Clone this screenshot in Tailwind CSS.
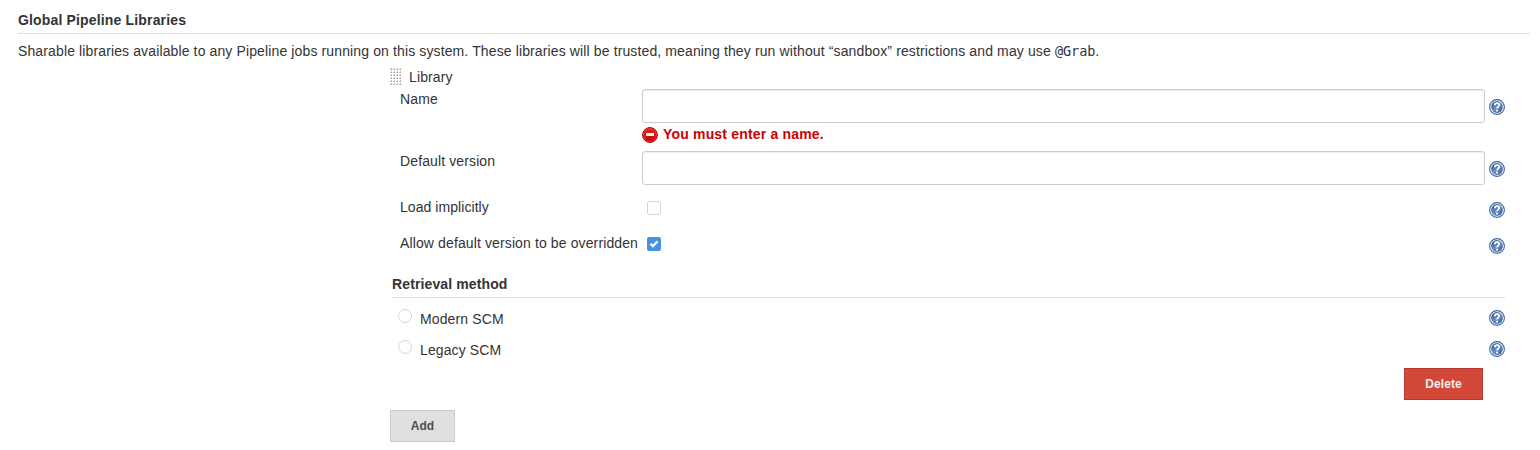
<!DOCTYPE html>
<html lang="en">
<head>
<meta charset="utf-8">
<title>Global Pipeline Libraries</title>
<script src="https://cdn.jsdelivr.net/npm/@tailwindcss/browser@4"></script>
</head>
<body class="h-[450px] overflow-hidden bg-white font-['Liberation_Sans',Arial,sans-serif] text-[14px] leading-5 tracking-[0.12px] text-[#333]">
<svg class="absolute size-0">
  <defs>
    <linearGradient id="blue" x1="0" y1="0" x2="1" y2="1"><stop offset="0" stop-color="#204a87"/><stop offset=".5" stop-color="#6f90c2"/><stop offset="1" stop-color="#2a5592"/></linearGradient>
    <linearGradient id="red" x1="0" y1="0" x2="0" y2="1"><stop offset="0" stop-color="#e81e1e"/><stop offset="1" stop-color="#cc0000"/></linearGradient>
    <pattern id="grip" width="3" height="3" patternUnits="userSpaceOnUse"><path d="M1 0h1v1H1zM0 1h1v1H0z" fill="#c4c2bd"/><path d="M1 1h1v1H1z" fill="#aaa8a3"/></pattern>
  </defs>
  <symbol id="help" viewBox="0 0 16 16">
    <circle cx="8" cy="8" r="7.400" fill="#fff" stroke="#3465a4" stroke-width="1.100"/>
    <circle cx="8" cy="8" r="5.900" fill="url(#blue)"/>
    <path d="M5.800 6.300C5.800 3.400 10.300 3.500 10.200 6c0 1.500-2.100 1.700-2.100 3.500" fill="none" stroke="#fff" stroke-width="1.800"/>
    <path d="M7.100 10.700h2v1.800h-2z" fill="#fff"/>
  </symbol>
</svg>
<main class="pt-[10px] pl-[18px] pr-[10px]">
  <h1 class="h-6 border-b border-[#ddd] font-bold tracking-[0.16px]">Global Pipeline Libraries</h1>
  <p class="mt-[7px] h-5 whitespace-nowrap tracking-[0.125px]">Sharable libraries available to any Pipeline jobs running on this system. These libraries will be trusted, meaning they run without “sandbox” restrictions and may use <code class="font-['DejaVu_Sans_Mono',monospace] text-[13.5px] leading-none tracking-[-0.05px]">@Grab</code>.</p>
  <section class="ml-[372px] w-[1115px] pt-[6px]">
    <div class="flex h-[22px] items-start">
      <svg class="mt-px h-[17px] w-[11px]"><rect width="11" height="17" fill="url(#grip)"/></svg>
      <span class="ml-2">Library</span>
    </div>
    <div class="flex h-[62px]">
      <label for="name" class="w-[252px] pl-[10px]">Name</label>
      <div class="w-[843px]">
        <input id="name" class="block h-[34px] w-full rounded-[3px] border border-[#ccc] px-2 shadow-[inset_0_1px_1px_rgba(0,0,0,0.075)]">
        <div class="flex pt-px font-bold tracking-[0.18px] text-[#c00]">
          <svg class="mt-[3px] mr-[5px] size-4" viewBox="0 0 16 16"><circle cx="8" cy="8" r="7.400" fill="url(#red)" stroke="#b00000"/><circle cx="8" cy="8" r="6.400" fill="none" stroke="#ee5050" stroke-width=".7"/><path d="M4 6h8v3H4z" fill="#fff"/></svg>
          <span>You must enter a name.</span>
        </div>
      </div>
      <svg class="mt-[10px] ml-1 size-4"><use href="#help"/></svg>
    </div>
    <div class="flex h-[46px]">
      <label for="version" class="w-[252px] pl-[10px]">Default version</label>
      <input id="version" class="block h-[34px] w-[843px] rounded-[3px] border border-[#ccc] px-2 shadow-[inset_0_1px_1px_rgba(0,0,0,0.075)]">
      <svg class="mt-[10px] ml-1 size-4"><use href="#help"/></svg>
    </div>
    <div class="flex h-9">
      <span class="w-[257px] pl-[10px] tracking-[0.06px] whitespace-nowrap">Load implicitly</span>
      <svg class="mt-1 size-[14px]"><rect x=".5" y=".5" width="13" height="13" rx="1.500" fill="#fff" stroke="#cdd3e6"/></svg>
      <svg class="mt-[5px] ml-auto size-4"><use href="#help"/></svg>
    </div>
    <div class="flex h-[41px]">
      <span class="w-[257px] pl-[10px] whitespace-nowrap">Allow default version to be overridden</span>
      <svg class="mt-1 size-[14px]"><rect width="14" height="14" rx="2" fill="#4a90e2"/><path d="M3.500 6.700l2.400 2.400 4.700-4.700" fill="none" stroke="#fff" stroke-width="2.200"/></svg>
      <svg class="mt-[5px] ml-auto size-4"><use href="#help"/></svg>
    </div>
    <h2 class="ml-[2px] h-6 border-b border-[#ddd] font-bold">Retrieval method</h2>
    <div class="flex h-[31px] pt-[11px] pl-2">
      <svg class="size-[14px]"><circle cx="7" cy="7" r="6.500" fill="#fff" stroke="#cdd6ee"/></svg>
      <span class="ml-2">Modern SCM</span>
      <svg class="mt-[1px] ml-auto size-4"><use href="#help"/></svg>
    </div>
    <div class="flex h-[31px] pt-[11px] pl-2">
      <svg class="size-[14px]"><circle cx="7" cy="7" r="6.500" fill="#fff" stroke="#cdd6ee"/></svg>
      <span class="ml-2">Legacy SCM</span>
      <svg class="mt-[1px] ml-auto size-4"><use href="#help"/></svg>
    </div>
    <button class="mt-2 mr-[22px] ml-auto block h-8 w-[79px] border border-[#b8382c] bg-[#d24939] text-[12px] font-bold tracking-[0.08px] text-[#eee]">Delete</button>
    <button class="mt-[10px] block h-8 w-[65px] border border-[#ccc] bg-[#e0e0e0] text-[12px] font-bold tracking-normal text-[#4d4d4d]">Add</button>
  </section>
</main>
</body>
</html>
